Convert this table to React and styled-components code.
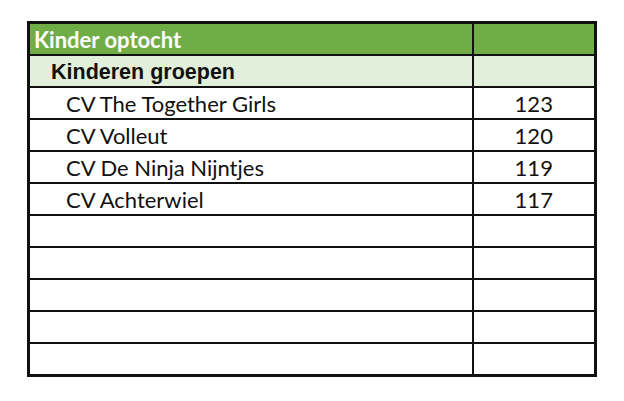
import styled, { createGlobalStyle } from 'styled-components';

const Global = createGlobalStyle`
    body {
        margin: 0;
        background: #fff;
    }
`;

const Page = styled.div`
    width: 624px;
    height: 401px;
    padding: 21px 0 0 27px;
    box-sizing: border-box;
`;

const Table = styled.table`
    border-collapse: collapse;
    border: 3px solid #111;
    table-layout: fixed;
    width: 570px;
`;

const Row = styled.tr`
    height: 32px;
    background: ${p => p.$kind === 'title' ? '#70ad47' : p.$kind === 'group' ? '#e2efda' : '#fff'};
`;

const Cell = styled.td`
    border: 2.5px solid #111;
    padding: 2px 0 0 ${p => p.$indent || 0}px;
    line-height: 28px;
    text-align: ${p => p.$num ? 'center' : 'left'};
    font-family: ${p => p.$arial ? '"Liberation Sans", Arial, sans-serif' : 'Lato, "Open Sans", sans-serif'};
    font-weight: ${p => p.$bold ? 700 : 400};
    font-size: ${p => p.$arial ? '21.5px' : '22px'};
    color: ${p => p.$white ? '#fff' : '#111'};
    white-space: nowrap;
    vertical-align: middle;
`;

const groepen = [
    { naam: 'CV The Together Girls', punten: 123 },
    { naam: 'CV Volleut', punten: 120 },
    { naam: 'CV De Ninja Nijntjes', punten: 119 },
    { naam: 'CV Achterwiel', punten: 117 },
];

const App = () => {
    const leeg = [1, 2, 3, 4, 5];
    return (
        <>
            <Global />
            <Page>
                <Table>
                    <colgroup>
                        <col style={{ width: '444px' }} />
                        <col />
                    </colgroup>
                    <tbody>
                        <Row $kind="title">
                            <Cell $indent={4} $bold $white>Kinder optocht</Cell>
                            <Cell></Cell>
                        </Row>
                        <Row $kind="group">
                            <Cell $indent={21} $bold $arial>Kinderen groepen</Cell>
                            <Cell></Cell>
                        </Row>
                        {groepen.map(item => (
                            <Row key={item.naam}>
                                <Cell $indent={36}>{item.naam}</Cell>
                                <Cell $num>{item.punten}</Cell>
                            </Row>
                        ))}
                        {leeg.map(i => (
                            <Row key={i}>
                                <Cell></Cell>
                                <Cell></Cell>
                            </Row>
                        ))}
                    </tbody>
                </Table>
            </Page>
        </>
    );
};

export default App;
